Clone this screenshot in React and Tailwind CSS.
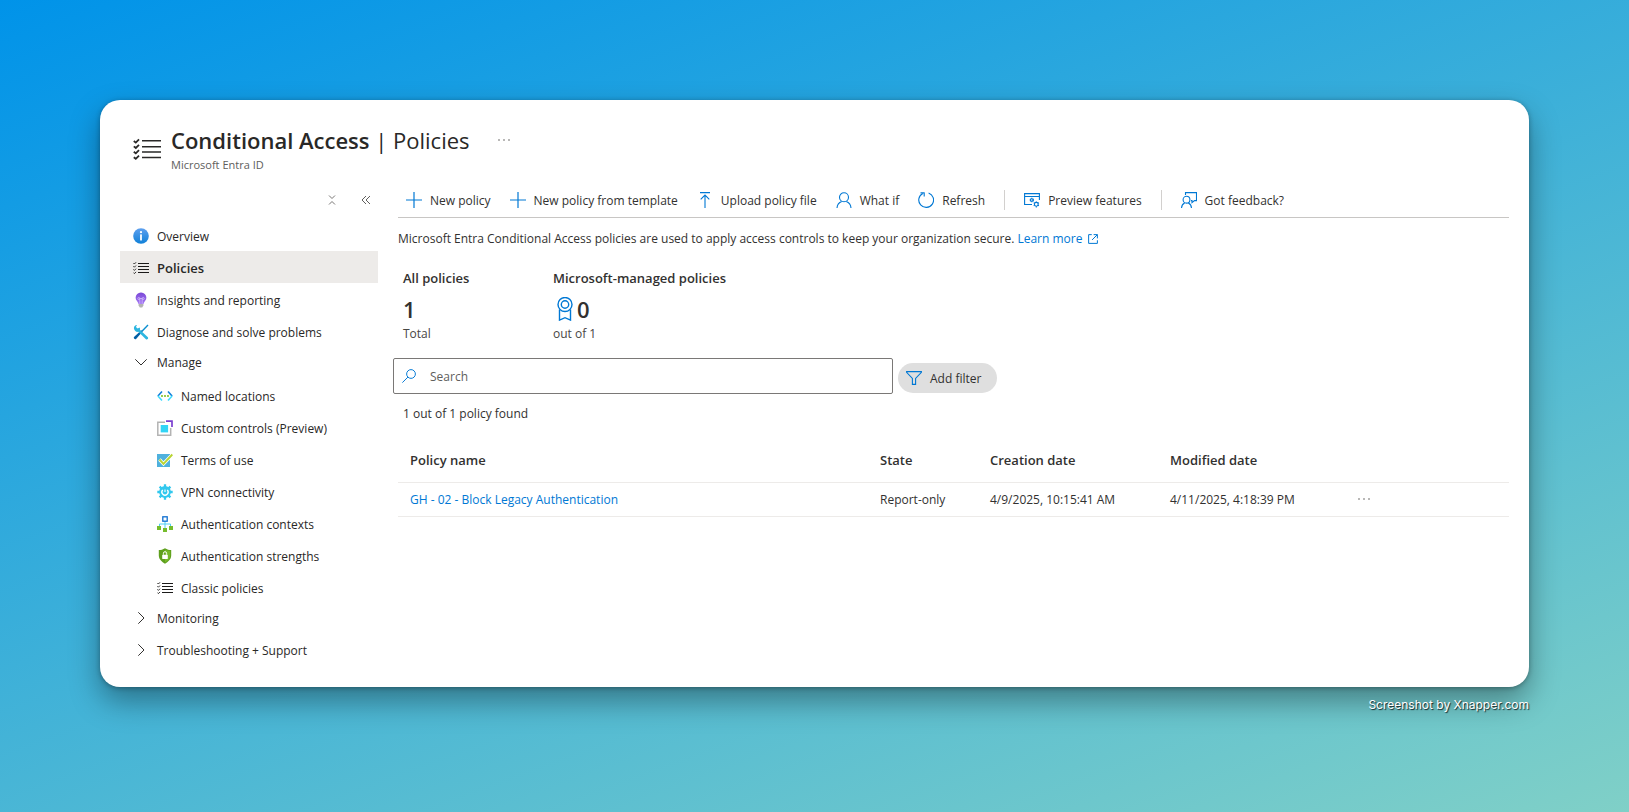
const BLUE = "#0078d4";

function Checklist({ className }) {
  return (
    <svg viewBox="0 0 28 22" className={className} fill="none" stroke="currentColor">
      <path strokeWidth="1.500" d="M9 2.800h19M9 8.800h19M9 14h19M9 19.600h19" />
      <path strokeWidth="1.800" d="M.8 3l2 1.600L6 1.400M.8 8.400l2 1.600L6 6.800M.8 13.800l2 1.600L6 12.200M.8 19.200l2 1.600L6 17.600" />
    </svg>
  );
}

function ChecklistSmall() {
  return (
    <svg viewBox="0 0 16 16" className="size-4" fill="none" stroke="#1b1a19">
      <path d="M5 3.500h11M5 6.500h11M5 9.500h11M5 12.500h11" />
      <path strokeWidth=".9" d="M.4 3l1 1L3 2.300M.4 6.200l1 1L3 5.500M.4 9.400l1 1L3 8.700M.4 12.600l1 1L3 11.900" />
    </svg>
  );
}

function InfoIcon() {
  return (
    <svg viewBox="0 0 16 16" className="size-4">
      <defs>
        <linearGradient id="info" x1="0" y1="0" x2="0" y2="1">
          <stop offset="0" stopColor="#5ea0ef" />
          <stop offset="1" stopColor="#0f80d8" />
        </linearGradient>
      </defs>
      <circle cx="8" cy="8" r="7.800" fill="url(#info)" />
      <circle cx="8" cy="4.200" r="1.100" fill="#fff" />
      <rect x="7.100" y="6.300" width="1.800" height="6.200" rx=".6" fill="#fff" />
    </svg>
  );
}

function BulbIcon() {
  return (
    <svg viewBox="0 0 16 16" className="size-4">
      <defs>
        <linearGradient id="bulb" x1="0" y1="0" x2="0" y2="1">
          <stop offset="0" stopColor="#7a48d6" />
          <stop offset="1" stopColor="#a67af4" />
        </linearGradient>
      </defs>
      <path d="M8 .5a5.300 5.300 0 0 0-5.400 5.300c0 2.600 2.300 3.400 2.900 6.200h5c.6-2.800 2.900-3.600 2.900-6.200A5.300 5.300 0 0 0 8 .5z" fill="url(#bulb)" />
      <path d="M6.800 11.800V6.500M9.200 11.800V6.500M6.800 6.500h2.400M6.800 6.500a1 1 0 1 1-1-1 1 1 0 0 1 1 1zM9.200 6.500a1 1 0 1 0 1-1 1 1 0 0 0-1 1z" fill="none" stroke="#d9c4ff" strokeWidth=".7" />
      <path d="M5.600 12h4.800v1.600L9.200 15.500H6.800l-1.200-1.900z" fill="#b3b3b3" />
    </svg>
  );
}

function ToolsIcon() {
  return (
    <svg viewBox="0 0 16 16" className="size-4">
      <path d="M15 1L9 7.200" stroke="#0a8fd0" strokeWidth="1.400" />
      <path d="M8.300 6.300l1.300 1.300-6.500 7.500c-1 .9-3-.9-2.100-2z" fill="#005fa5" />
      <path d="M1 4.700C.6 2.700 2 .9 4 1L2.900 2.900l1.800 1.700L6.600 3.500c.5 1 .5 1.600.3 2.300l8 7.400c.9 1.400-.7 2.900-2 2L5.300 7.800C3.300 8.200 1.500 7 1 4.700z" fill="#2db6e0" />
    </svg>
  );
}

function LocationsIcon() {
  return (
    <svg viewBox="0 0 16 16" className="size-4" fill="none" strokeWidth="1.600">
      <path d="M5 3.500L.9 8" stroke="#0f7fd9" />
      <path d="M.9 8L5 12.500" stroke="#40dcff" />
      <path d="M11 3.500L15.100 8" stroke="#0f7fd9" />
      <path d="M15.100 8L11 12.500" stroke="#40dcff" />
      <g fill="#6bb700"><circle cx="5" cy="8" r=".9" /><circle cx="8" cy="8" r=".9" /><circle cx="11" cy="8" r=".9" /></g>
    </svg>
  );
}

function CustomIcon() {
  return (
    <svg viewBox="0 0 16 16" className="size-4" fill="none">
      <path d="M8 2.300H.8v12.900h12.900V8" stroke="#b3b3b3" strokeWidth="1.500" />
      <rect x="3.700" y="5" width="7.400" height="7.400" fill="#32d4f5" />
      <path d="M9 1.100h6v6" stroke="#7b3fd0" strokeWidth="1.700" />
    </svg>
  );
}

function TermsIcon() {
  return (
    <svg viewBox="0 0 16 16" className="size-4">
      <rect x="0" y="2" width="13" height="13" fill="#4fb1dd" />
      <path d="M2.500 7.500l4 4.300L15 3" fill="none" stroke="#fff" strokeWidth="3.400" />
      <path d="M2.500 7.500l4 4.300L15.300 2.500" fill="none" stroke="#b8d432" strokeWidth="1.900" />
    </svg>
  );
}

function GearIcon() {
  return (
    <svg viewBox="0 0 16 16" className="size-4" fill="none">
      <g stroke="#32c8ee" strokeWidth="2.300">
        <path d="M8 .3v15.400M.3 8h15.400M2.600 2.600l10.800 10.800M13.400 2.600L2.600 13.400" />
      </g>
      <circle cx="8" cy="8" r="5.900" fill="#32c8ee" />
      <path d="M5.700 5.900a3.100 3.100 0 1 0 4.600 0" stroke="#fff" strokeWidth="1.300" />
      <path d="M8 8V5.500" stroke="#fff" strokeWidth="1.100" />
    </svg>
  );
}

function ContextIcon() {
  return (
    <svg viewBox="0 0 16 16" className="size-4" fill="none">
      <path d="M8 5v7M2.500 11V8h11v3" stroke="#50d0f5" strokeWidth="1" />
      <rect x="5.800" y=".8" width="4.400" height="4.400" stroke="#0f6fd0" strokeWidth="1.300" fill="#fff" />
      <g fill="#76bc2d"><rect x="0" y="10" width="4" height="4" /><rect x="6" y="12" width="4" height="4" /><rect x="12" y="10" width="4" height="4" /></g>
    </svg>
  );
}

function ShieldIcon() {
  return (
    <svg viewBox="0 0 16 16" className="size-4">
      <path d="M8 .3c2 1.400 4 1.700 6.200 1.700v5.500c0 3.800-3.200 6.400-6.200 8.200C5 13.900 1.800 11.300 1.800 7.500V2C4 2 6 1.700 8 .3z" fill="#5e9f1d" />
      <path d="M8 1.500c1.700 1 3.500 1.400 5.200 1.400v4.600c0 3.200-2.700 5.500-5.200 7z" fill="#76b82a" />
      <rect x="5.200" y="6.700" width="5.600" height="4.300" rx=".4" fill="#fff" />
      <path d="M6.400 6.700V5.300a1.600 1.600 0 0 1 3.200 0v1.400" fill="none" stroke="#fff" strokeWidth="1" />
    </svg>
  );
}

function Chevron({ open }) {
  return (
    <svg viewBox="0 0 16 16" className="size-4" fill="none" stroke="#323130">
      <path d={open ? "M2.300 5.300l5.700 5.700 5.700-5.700" : "M5.300 2.300l5.700 5.700-5.700 5.700"} />
    </svg>
  );
}

function LineIcon({ children, className = "size-4" }) {
  return (
    <svg viewBox="0 0 16 16" className={className} fill="none" stroke={BLUE} strokeWidth="1.100">
      {children}
    </svg>
  );
}

const plus = (
  <LineIcon>
    <path d="M8 0v16M0 8h16" strokeWidth="1.200" />
  </LineIcon>
);

const upload = (
  <LineIcon>
    <path d="M3 .6h10M8 3v13M3.700 7.300L8 3l4.300 4.300" />
  </LineIcon>
);

const person = (
  <LineIcon>
    <circle cx="8" cy="5.300" r="4.500" />
    <path d="M1 16c.3-3.700 2.700-5.700 4.700-6.400M15 16c-.3-3.700-2.700-5.700-4.700-6.400" />
  </LineIcon>
);

const refresh = (
  <LineIcon>
    <path d="M10.600 1A7.400 7.400 0 1 1 4.800 1.400" />
    <path d="M2.500.9h4M6.200.6v4" />
  </LineIcon>
);

const preview = (
  <LineIcon>
    <path d="M8 12.500H.6V1.600h14.800V8M.6 4.500h14.800" />
    <circle cx="7.800" cy="8" r="1.300" />
    <path d="M7.800 5.700v1M7.800 9.300v1M5.800 6.900l.9.500M9.800 6.900l-.9.500M5.800 9.100l.9-.5M9.800 9.100l-.9-.5" />
    <circle cx="12.300" cy="12.300" r="1.900" />
    <path d="M12.300 9.400v1M12.300 14.200v1.200M9.700 10.800l.9.500M14.900 10.800l-.9.500M9.700 13.800l.9-.5M14.900 13.800l-.9-.5" />
  </LineIcon>
);

const feedback = (
  <LineIcon>
    <circle cx="5.500" cy="7.700" r="3.400" />
    <path d="M.5 16c.2-2.900 1.500-4.300 3.200-5M10.500 16c-.2-2.900-1.500-4.300-3.200-5" />
    <path d="M4.500 3V.6h11v8h-2l-2.500 2v-2h-1" />
  </LineIcon>
);

function Dots() {
  return (
    <svg viewBox="0 0 12 4" className="h-1 w-3" fill="#605e5c">
      <circle cx="1" cy="2" r=".8" /><circle cx="6" cy="2" r=".8" /><circle cx="11" cy="2" r=".8" />
    </svg>
  );
}

function ToolButton({ icon, label }) {
  return (
    <button type="button" className="flex items-center gap-2 whitespace-nowrap">
      {icon}
      <span className="pt-0.5">{label}</span>
    </button>
  );
}

function NavItem({ icon, label, nested, active }) {
  return (
    <li>
      <a
        href="#"
        aria-current={active ? "page" : undefined}
        className={
          "flex h-8 items-center gap-2 pt-0.5 " +
          (nested ? "pl-[37px] " : "pl-[13px] ") +
          (active ? "bg-[#edebe9] text-[13px] font-semibold" : "")
        }
      >
        {icon}
        <span className={active ? "" : "pt-0.5"}>{label}</span>
      </a>
    </li>
  );
}

function NavGroup({ label, open, children }) {
  return (
    <li>
      <button type="button" aria-expanded={!!open} className="flex h-8 w-full items-center gap-2 pb-0.5 pl-[13px]">
        <Chevron open={open} />
        <span className="pt-0.5">{label}</span>
      </button>
      {children && <ul>{children}</ul>}
    </li>
  );
}

function Sidebar() {
  return (
    <nav aria-label="Conditional Access" className="w-[258px] shrink-0 text-[#292827]">
      <div className="flex h-[35px] items-center justify-end gap-6 pr-[7px] pb-[3px]">
        <button type="button" aria-label="Collapse all groups">
          <svg viewBox="0 0 10 10" className="size-[10px]" fill="none" stroke="#797775">
            <path d="M2 .5l3 3 3-3M2 9.500l3-3 3 3" />
          </svg>
        </button>
        <button type="button" aria-label="Collapse menu">
          <svg viewBox="0 0 10 10" className="size-[10px]" fill="none" stroke="#605e5c">
            <path d="M5 1L1 5l4 4M9 1L5 5l4 4" />
          </svg>
        </button>
      </div>
      <ul>
        <NavItem icon={<InfoIcon />} label="Overview" />
        <NavItem icon={<ChecklistSmall />} label="Policies" active />
        <NavItem icon={<BulbIcon />} label="Insights and reporting" />
        <NavItem icon={<ToolsIcon />} label="Diagnose and solve problems" />
        <NavGroup label="Manage" open>
          <NavItem nested icon={<LocationsIcon />} label="Named locations" />
          <NavItem nested icon={<CustomIcon />} label="Custom controls (Preview)" />
          <NavItem nested icon={<TermsIcon />} label="Terms of use" />
          <NavItem nested icon={<GearIcon />} label="VPN connectivity" />
          <NavItem nested icon={<ContextIcon />} label="Authentication contexts" />
          <NavItem nested icon={<ShieldIcon />} label="Authentication strengths" />
          <NavItem nested icon={<ChecklistSmall />} label="Classic policies" />
        </NavGroup>
        <NavGroup label="Monitoring" />
        <NavGroup label="Troubleshooting + Support" />
      </ul>
    </nav>
  );
}

function Toolbar() {
  return (
    <div className="ml-[5px] flex h-[34px] items-center gap-[19px] border-b border-[#c8c6c4] pb-0.5 pl-2">
      <ToolButton icon={plus} label="New policy" />
      <ToolButton icon={plus} label="New policy from template" />
      <ToolButton icon={upload} label="Upload policy file" />
      <ToolButton icon={person} label="What if" />
      <ToolButton icon={refresh} label="Refresh" />
      <div className="h-5 w-px bg-[#d2d0ce]" />
      <ToolButton icon={preview} label="Preview features" />
      <div className="h-5 w-px bg-[#d2d0ce]" />
      <ToolButton icon={feedback} label="Got feedback?" />
    </div>
  );
}

function Summary() {
  return (
    <div className="mt-[19px] flex pl-[10px]">
      <section className="w-[150px]">
        <h2 className="text-[13px] font-semibold">All policies</h2>
        <p className="flex h-[42px] items-center text-[22px] font-semibold">1</p>
        <p className="-mt-1 leading-4 text-[#484644]">Total</p>
      </section>
      <section>
        <h2 className="text-[13px] font-semibold">Microsoft-managed policies</h2>
        <p className="flex h-[42px] items-center text-[22px] font-semibold">
          <svg viewBox="0 0 24 24" className="size-6" fill="none" stroke={BLUE} strokeWidth="1.400">
            <circle cx="12" cy="7.500" r="7" />
            <circle cx="12" cy="7.500" r="3.700" />
            <path d="M6.500 12.500v10.600l5.500-2.400 5.500 2.400V12.500" />
          </svg>
          0
        </p>
        <p className="-mt-1 leading-4 text-[#484644]">out of 1</p>
      </section>
    </div>
  );
}

function Filters() {
  return (
    <div className="mt-4 flex items-end gap-[5px]">
      <label className="flex h-9 w-[500px] items-center rounded-xs border border-[#7a7876] pl-2">
        <LineIcon className="size-[14px]">
          <circle cx="10.300" cy="5.700" r="5" />
          <path d="M6.800 9.200L.4 15.600" />
        </LineIcon>
        <input
          type="search"
          aria-label="Search"
          placeholder="Search"
          className="min-w-0 flex-1 bg-transparent pt-0.5 pl-[14px] outline-none placeholder:text-[#605e5c]"
        />
      </label>
      <button type="button" className="mb-px flex h-[30px] items-center gap-2 rounded-full bg-[#dfdfdf] pr-4 pl-2">
        <LineIcon>
          <path d="M.6 1.600h14.800v.8L9.600 8.400v6H6.400v-6L.6 2.400z" />
        </LineIcon>
        <span className="pt-0.5">Add filter</span>
      </button>
    </div>
  );
}

function PolicyTable() {
  return (
    <table className="mt-[15px] ml-[5px] w-[calc(100%-5px)] table-fixed border-collapse text-left">
      <colgroup>
        <col />
        <col className="w-[110px]" />
        <col className="w-[180px]" />
        <col className="w-[180px]" />
        <col className="w-[171px]" />
      </colgroup>
      <thead className="text-[13px]">
        <tr className="h-[43px] border-b border-[#edebe9]">
          <th className="pl-3 font-semibold">Policy name</th>
          <th className="pl-3 font-semibold">State</th>
          <th className="pl-3 font-semibold">Creation date</th>
          <th className="pl-3 font-semibold">Modified date</th>
          <td />
        </tr>
      </thead>
      <tbody>
        <tr className="h-[34px] border-b border-[#edebe9]">
          <td className="pt-0.5 pl-3"><a href="#" className="text-[#0078d4]">GH - 02 - Block Legacy Authentication</a></td>
          <td className="pt-0.5 pl-3">Report-only</td>
          <td className="pt-0.5 pl-3">4/9/2025, 10:15:41 AM</td>
          <td className="pt-0.5 pl-3">4/11/2025, 4:18:39 PM</td>
          <td className="pl-5">
            <button type="button" aria-label="Policy actions" className="block">
              <Dots />
            </button>
          </td>
        </tr>
      </tbody>
    </table>
  );
}

export default function App() {
  return (
    <div className="min-h-screen bg-[linear-gradient(160deg,#0093e9_0%,#80d0c7_100%)] p-[100px] font-['Open_Sans','Noto_Sans',sans-serif] text-[12px] leading-5 text-[#323130]">
      <div className="rounded-[20px] bg-white p-5 shadow-[0_14px_30px_rgba(0,0,0,0.36),0_1px_5px_rgba(0,0,0,0.3)]">
        <header className="flex h-[64px] gap-[10px] pt-1 pl-[13px] text-[#292827]">
          <Checklist className="mt-[14px] h-[22px] w-7" />
          <div>
            <div className="flex items-center gap-7">
              <h1 className="text-[22px] leading-8 font-semibold">
                Conditional Access <span className="font-normal">| Policies</span>
              </h1>
              <button type="button" aria-label="More">
                <Dots />
              </button>
            </div>
            <p className="mt-px text-[11px] leading-4 text-[#605e5c]">Microsoft Entra ID</p>
          </div>
        </header>
        <div className="flex">
          <Sidebar />
          <main className="ml-[15px] min-w-0 flex-1">
            <Toolbar />
            <p className="mt-[11px] ml-[5px]">
              Microsoft Entra Conditional Access policies are used to apply access controls to keep your organization secure.{" "}
              <a href="#" className="inline-flex items-center gap-[6px] text-[#0078d4]">
                Learn more
                <LineIcon className="size-[10px]">
                  <path strokeWidth="1.600" d="M6 1H1v14h14v-5M9 1h6v6M15 1L6.500 9.500" />
                </LineIcon>
              </a>
            </p>
            <Summary />
            <Filters />
            <p className="mt-[10px] ml-[10px]">1 out of 1 policy found</p>
            <PolicyTable />
          </main>
        </div>
      </div>
      <p className="mt-2 text-right font-['Inter',sans-serif] text-[12px] text-white [text-shadow:1px_1px_1px_rgba(0,0,0,0.8)]">
        Screenshot by Xnapper.com
      </p>
    </div>
  );
}
